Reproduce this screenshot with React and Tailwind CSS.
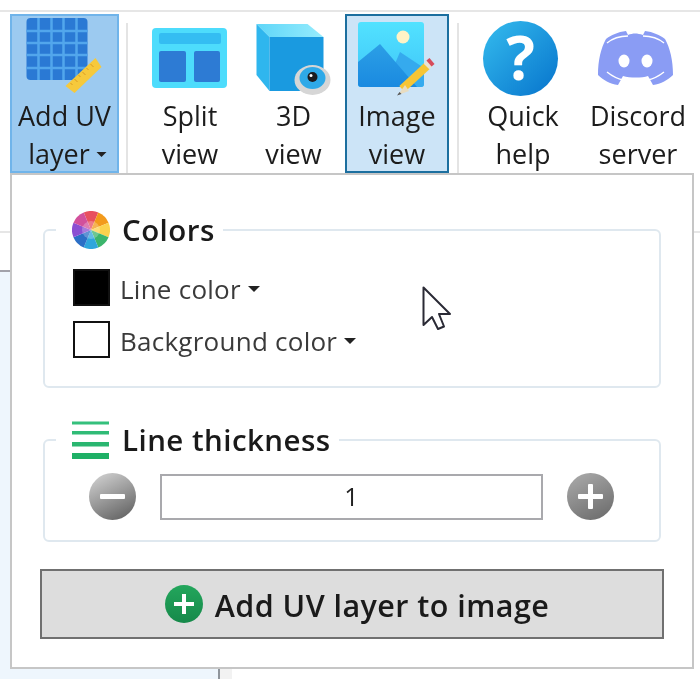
const FONT = "font-['Open_Sans',sans-serif]";
const HEADING = "font-semibold tracking-[0.45px] text-[#1a1a1a]";

const wheelColors = ["#e8505f", "#f29a1c", "#fbd24e", "#3cb56c", "#2fa6dc", "#2b6fc6", "#8a4fd2", "#d2509c"];

const wedge = (i) => {
  const a = ((i * 45 - 112.5) * Math.PI) / 180;
  const b = (((i + 1) * 45 - 112.5) * Math.PI) / 180;
  return `M91 230L${91 + 19 * Math.cos(a)} ${230 + 19 * Math.sin(a)}A19 19 0 0 1 ${91 + 19 * Math.cos(b)} ${230 + 19 * Math.sin(b)}Z`;
};

const Caret = ({ className }) => (
  <svg viewBox="0 0 12 6" className={className}>
    <path d="M0 0H12L6 6Z" fill="#222" />
  </svg>
);

// ribbon icons are drawn in page coordinates, cx is the middle of the button
const RibbonIcon = ({ cx, children }) => (
  <svg viewBox={`${cx - 45} 16 90 82`} className="w-[90px] h-[82px] shrink-0">
    {children}
  </svg>
);

const UvIcon = () => (
  <RibbonIcon cx={64.5}>
    <rect x="26" y="18" width="61" height="62" rx="4" fill="#2a79d4" />
    {[38, 51, 63, 76].map((x) => (
      <rect key={x} x={x - 1.25} y="18" width="2.5" height="62" fill="#52a6ec" />
    ))}
    {[31, 43, 55, 68].map((y) => (
      <rect key={y} x="26" y={y - 1.25} width="61" height="2.5" fill="#52a6ec" />
    ))}
    <path d="M65 86L95 58L101 67L74 93Z" fill="#f6c93c" />
    <path d="M70 83l2 2M74 79l3 3M78 75l2 2M82 72l3 3M86 68l2 2M90 64l3 3" stroke="#d99a22" strokeWidth="1" />
  </RibbonIcon>
);

const SplitIcon = () => (
  <RibbonIcon cx={190}>
    <rect x="152" y="28" width="75" height="60" rx="4" fill="#4ddcfc" />
    <rect x="159" y="33" width="62" height="11" rx="2" fill="#34bdf2" />
    <rect x="159" y="51" width="27" height="31" rx="2" fill="#2d7bd4" />
    <rect x="194" y="51" width="26" height="31" rx="2" fill="#2d7bd4" />
  </RibbonIcon>
);

const CubeIcon = () => (
  <RibbonIcon cx={293.5}>
    <defs>
      <linearGradient id="cubeTop" x1="0" y1="0" x2="1" y2="0">
        <stop offset="0" stopColor="#5fd6f8" />
        <stop offset="1" stopColor="#96ecfd" />
      </linearGradient>
    </defs>
    <path d="M256 24H307L323 37H269Z" fill="url(#cubeTop)" />
    <path d="M256 24L269 37V91L256 75Z" fill="#2fb6ee" />
    <rect x="269" y="37" width="54" height="54" fill="#1a9ae0" />
    <ellipse cx="312" cy="80" rx="18" ry="15" fill="#d6d6d6" />
    <ellipse cx="312" cy="78" rx="13" ry="11" fill="#2ea9e8" />
    <circle cx="312" cy="77" r="5" fill="#1b1b1f" />
    <circle cx="310.5" cy="75.5" r="1.5" fill="#fff" />
  </RibbonIcon>
);

const ImageIcon = () => (
  <RibbonIcon cx={397}>
    <defs>
      <linearGradient id="sky" x1="0" y1="0" x2="0" y2="1">
        <stop offset="0" stopColor="#52e2ff" />
        <stop offset="1" stopColor="#3ec4f8" />
      </linearGradient>
      <linearGradient id="hill" x1="0" y1="0" x2="0" y2="1">
        <stop offset="0" stopColor="#2c9fe6" />
        <stop offset="1" stopColor="#1a8ae0" />
      </linearGradient>
    </defs>
    <rect x="358" y="22" width="66" height="65" rx="3" fill="url(#sky)" />
    <circle cx="403" cy="37" r="6.5" fill="#fff3c6" />
    <path d="M400 52L424 68V84a3 3 0 0 1-3 3H385Z" fill="#35aaee" />
    <path d="M358 62L380 44L417 87H361a3 3 0 0 1-3-3Z" fill="url(#hill)" />
    <path d="M402 89L427 66" stroke="#f6c535" strokeWidth="8" />
    <path d="M426.5 66.5L430 63" stroke="#e8e3d6" strokeWidth="8" />
    <path d="M429 63.5L432 61" stroke="#d64c5c" strokeWidth="8" />
    <path d="M405 85L398 95L409 91Z" fill="#e8dcc0" />
    <path d="M399.5 92L397 95.5L401.5 94Z" fill="#555" />
  </RibbonIcon>
);

const HelpIcon = () => (
  <RibbonIcon cx={523}>
    <defs>
      <linearGradient id="helpFill" x1="0" y1="0" x2="1" y2="1">
        <stop offset="0" stopColor="#35bcee" />
        <stop offset="1" stopColor="#0673cc" />
      </linearGradient>
    </defs>
    <circle cx="520.5" cy="58.5" r="37.5" fill="url(#helpFill)" />
    <text x="520.5" y="80" textAnchor="middle" fontSize="60" fontWeight="700" fill="#fff" fontFamily="Open Sans, sans-serif">
      ?
    </text>
  </RibbonIcon>
);

const DiscordIcon = () => (
  <RibbonIcon cx={638}>
    <path
      d="M626 31C618 32 611 35 606 39C601 48 598 60 598 75C603 80 610 84 618 85L623 76C630 78 642 78 648 76L653 85C661 84 668 80 673 75C673 60 670 48 665 39C660 35 653 32 645 31L643 35C637 33 633 33 628 35Z"
      fill="#8a9cf4"
    />
    <path d="M607 43C613 38 620 36 628 36M664 43C658 38 651 36 643 36" stroke="#fff" strokeWidth="1.4" fill="none" />
    <path d="M607 72C612 76 617 79 624 80M664 72C659 76 654 79 647 80" stroke="#fff" strokeWidth="1.4" fill="none" />
    <ellipse cx="624" cy="61" rx="5.5" ry="6.5" fill="#fff" />
    <ellipse cx="647" cy="61" rx="5.5" ry="6.5" fill="#fff" />
  </RibbonIcon>
);

const RibbonButton = ({ width, tone, icon, lines, caret }) => (
  <div className={`${width} ${tone} h-[159px] shrink-0 border-2 flex flex-col items-center`}>
    {icon}
    <div className="-mt-px flex flex-col items-center">
      {lines.map((line, i) => (
        <div
          key={line}
          className={`${caret && i === 1 ? "pl-[6px]" : ""} h-[38px] leading-[38px] text-[27px] text-[#1c1c1c] whitespace-nowrap flex items-center gap-[6px]`}
        >
          {line}
          {caret && i === 1 && <Caret className="w-[11px] h-[5px]" />}
        </div>
      ))}
    </div>
  </div>
);

const Separator = () => <div className="w-[2px] h-[152px] mt-[9px] bg-[#e4e4e4] shrink-0" />;

const RoundButton = ({ from, to, children }) => (
  <svg viewBox="0 0 47 47" className="w-[47px] h-[47px] shrink-0">
    <defs>
      <linearGradient id={from.slice(1)} x1="0.2" y1="0" x2="0.7" y2="1">
        <stop offset="0" stopColor={from} />
        <stop offset="1" stopColor={to} />
      </linearGradient>
    </defs>
    <circle cx="23.5" cy="23.5" r="23.5" fill={`url(${from})`} />
    {children}
  </svg>
);

const ColorRow = ({ swatch, label }) => (
  <div className="flex items-center h-[37px]">
    <div className={`${swatch} w-[37px] h-[37px] border-2 border-[#111] shrink-0`} />
    <span className="ml-[10px] mt-[4px] text-[26px] tracking-[0.25px] leading-[37px] text-[#3a3a3a]">{label}</span>
    <Caret className="ml-[7px] mt-[2px] w-[12px] h-[6px]" />
  </div>
);

export default function App() {
  return (
    <div className={`${FONT} relative w-[700px] h-[679px] overflow-hidden bg-white flex flex-col pt-[10px] blur-[0.5px]`}>
      {/* ribbon */}
      <div className="border-t-2 border-[#e6e6e6] pt-[2px] pl-[10px] flex h-[163px] shrink-0">
        <RibbonButton width="w-[109px]" tone="bg-[#9ccaf0] border-[#70b4ea]" icon={<UvIcon />} lines={["Add UV", "layer"]} caret />
        <div className="ml-[7px] mr-[11px] flex">
          <Separator />
        </div>
        <RibbonButton width="w-[102px]" tone="border-transparent" icon={<SplitIcon />} lines={["Split", "view"]} />
        <div className="w-px" />
        <RibbonButton width="w-[103px]" tone="border-transparent" icon={<CubeIcon />} lines={["3D", "view"]} />
        <RibbonButton width="w-[104px]" tone="bg-[#cce4f7] border-[#1c6f9f]" icon={<ImageIcon />} lines={["Image", "view"]} />
        <div className="ml-[8px] mr-[11px] flex">
          <Separator />
        </div>
        <RibbonButton width="w-[106px]" tone="border-transparent" icon={<HelpIcon />} lines={["Quick", "help"]} />
        <div className="w-[4px]" />
        <RibbonButton width="w-[116px]" tone="border-transparent" icon={<DiscordIcon />} lines={["Discord", "server"]} />
      </div>

      {/* what sits behind the popup */}
      <div className="h-[60px] shrink-0 border-b-2 border-[#e6e6e6]" />
      <div className="flex-1 flex">
        <div className="w-[218px] flex flex-col">
          <div className="h-[39px] shrink-0 border-b-2 border-[#a2a2aa]" />
          <div className="flex-1 bg-[#eef6fd]" />
        </div>
        <div className="w-[2px] bg-[#8f959c]" />
        <div className="w-[12px] bg-[#f2f2f2]" />
        <div className="flex-1" />
      </div>

      {/* dropdown popup */}
      <div className="absolute left-[10px] top-[173px] w-[684px] h-[496px] bg-white border-2 border-[#c6c6c6] px-[31px] pt-[36px]">
        <fieldset className="border-2 border-[#dfe8ef] rounded-[6px]">
          <legend className="ml-[11px] pl-[16px] pr-[8px] flex items-center h-[38px]">
            <svg viewBox="72 211 38 38" className="w-[38px] h-[38px] shrink-0">
              {wheelColors.map((c, i) => (
                <path key={c} d={wedge(i)} fill={c} />
              ))}
              <circle cx="91" cy="230" r="9" fill="#fff" fillOpacity="0.25" />
            </svg>
            <span className={`${HEADING} ml-[12px] text-[29.5px] leading-[38px]`}>Colors</span>
          </legend>
          <div className="pl-[28px] pt-[20px] pb-[28px] flex flex-col gap-[15px]">
            <ColorRow swatch="bg-black" label="Line color" />
            <ColorRow swatch="bg-white" label="Background color" />
          </div>
        </fieldset>

        <fieldset className="mt-[33px] border-2 border-[#dfe8ef] rounded-[6px]">
          <legend className="ml-[11px] pl-[16px] pr-[8px] flex items-center h-[38px]">
            <svg viewBox="73 421 38 38" className="w-[38px] h-[38px] shrink-0">
              <rect x="73" y="421.5" width="37" height="3" fill="#35c07c" />
              <rect x="73" y="431" width="37" height="3.5" fill="#30bb76" />
              <rect x="73" y="442" width="37" height="4.5" fill="#2ab670" />
              <rect x="73" y="453" width="37" height="6" fill="#1fb066" />
            </svg>
            <span className={`${HEADING} ml-[12px] text-[29.5px] leading-[38px]`}>Line thickness</span>
          </legend>
          <div className="pl-[44px] pt-[14px] pb-[20px] flex items-center gap-[24px]">
            <RoundButton from="#cfcfcf" to="#666666">
              <rect x="11" y="21" width="25" height="5" rx="1" fill="#fff" />
            </RoundButton>
            <div className="w-[383px] h-[46px] border-2 border-[#a9a9ad] flex items-center justify-center text-[25px] text-[#222]">
              1
            </div>
            <RoundButton from="#a8a8a8" to="#6f6f6f">
              <rect x="11" y="21" width="25" height="5" rx="1" fill="#fff" />
              <rect x="21" y="11" width="5" height="25" rx="1" fill="#fff" />
            </RoundButton>
          </div>
        </fieldset>

        <div className="mt-[27px] -mx-[3px] h-[70px] pl-[10px] bg-[#dddddd] border-2 border-[#707070] flex items-center justify-center gap-[12px]">
          <svg viewBox="0 0 38 38" className="w-[38px] h-[38px] shrink-0">
            <defs>
              <linearGradient id="greenFill" x1="0" y1="0" x2="0" y2="1">
                <stop offset="0" stopColor="#23a65c" />
                <stop offset="1" stopColor="#16894a" />
              </linearGradient>
            </defs>
            <circle cx="19" cy="19" r="19" fill="url(#greenFill)" />
            <rect x="9" y="17" width="20" height="4" fill="#fff" />
            <rect x="17" y="9" width="4" height="20" fill="#fff" />
          </svg>
          <span className={`${HEADING} mt-[3px] text-[30.5px]`}>Add UV layer to image</span>
        </div>
      </div>

      {/* mouse pointer */}
      <svg viewBox="420 284 34 48" className="absolute left-[420px] top-[284px] w-[34px] h-[48px]">
        <path d="M423.5 287.5V325L432 317L438 329L444 326.5L439 314H450Z" fill="#fff" stroke="#2a2a35" strokeWidth="2" strokeLinejoin="round" />
      </svg>
    </div>
  );
}
